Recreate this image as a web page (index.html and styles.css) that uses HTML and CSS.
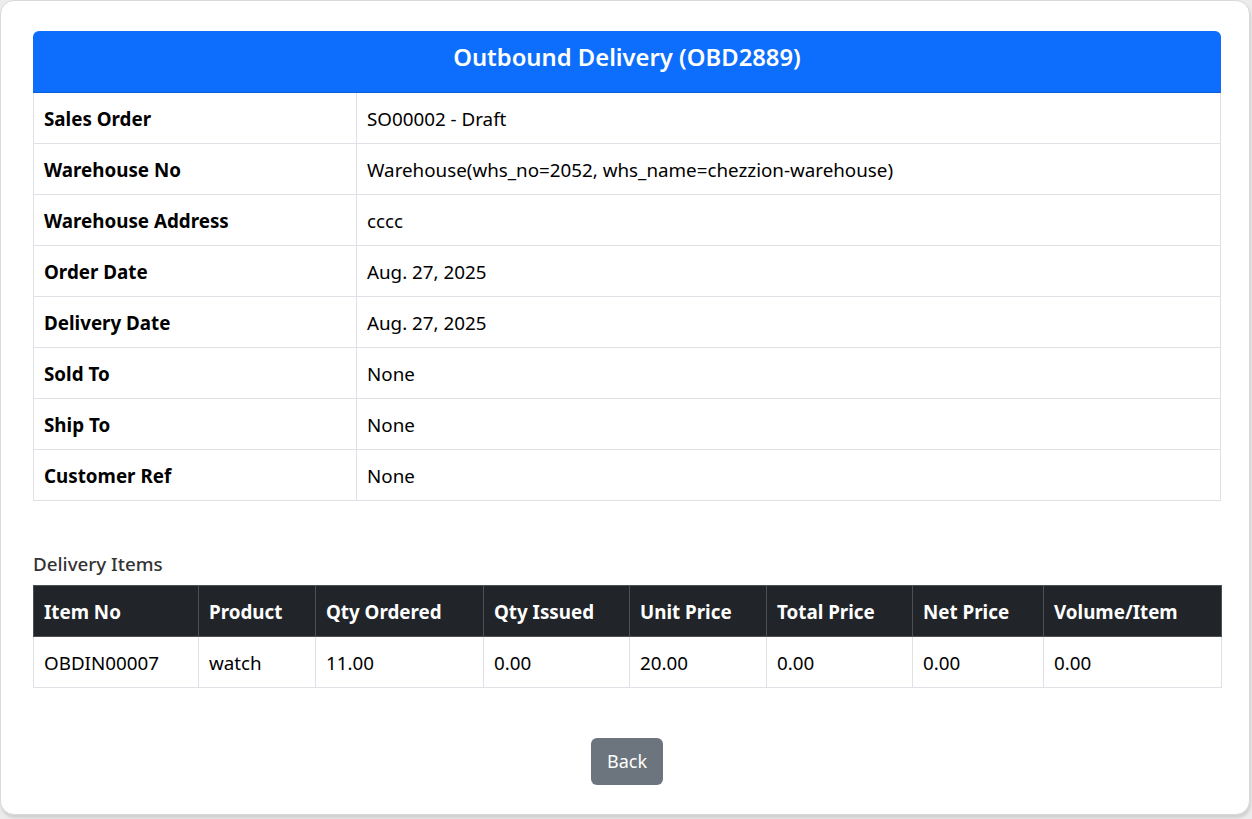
FILE: index.html
```html
<!DOCTYPE html>
<html lang="en">
<head>
<meta charset="utf-8">
<title>Outbound Delivery (OBD2889)</title>
<link rel="stylesheet" href="styles.css">
</head>
<body>
<div class="card">
  <div class="card-header">Outbound Delivery (OBD2889)</div>
  <table class="details">
    <colgroup><col class="label-col"><col></colgroup>
    <tbody>
      <tr><th>Sales Order</th><td>SO00002 - Draft</td></tr>
      <tr><th>Warehouse No</th><td>Warehouse(whs_no=2052, whs_name=chezzion-warehouse)</td></tr>
      <tr><th>Warehouse Address</th><td>cccc</td></tr>
      <tr><th>Order Date</th><td>Aug. 27, 2025</td></tr>
      <tr><th>Delivery Date</th><td>Aug. 27, 2025</td></tr>
      <tr><th>Sold To</th><td>None</td></tr>
      <tr><th>Ship To</th><td>None</td></tr>
      <tr><th>Customer Ref</th><td>None</td></tr>
    </tbody>
  </table>

  <h5 class="section-title">Delivery Items</h5>
  <table class="items">
    <colgroup>
      <col class="c1"><col class="c2"><col class="c3"><col class="c4">
      <col class="c5"><col class="c6"><col class="c7"><col class="c8">
    </colgroup>
    <thead>
      <tr>
        <th>Item No</th><th>Product</th><th>Qty Ordered</th><th>Qty Issued</th>
        <th>Unit Price</th><th>Total Price</th><th>Net Price</th><th>Volume/Item</th>
      </tr>
    </thead>
    <tbody>
      <tr>
        <td>OBDIN00007</td><td>watch</td><td>11.00</td><td>0.00</td>
        <td>20.00</td><td>0.00</td><td>0.00</td><td>0.00</td>
      </tr>
    </tbody>
  </table>

  <div class="actions">
    <a class="btn-back" href="#">Back</a>
  </div>
</div>
</body>
</html>
```

FILE: styles.css
```css
html, body {
  margin: 0;
  padding: 0;
}
body {
  background: #ececec;
  font-family: "Noto Sans", "Open Sans", sans-serif;
  color: #000;
  height: 819px;
  overflow: hidden;
}
.card {
  box-sizing: border-box;
  width: 1250px;
  height: 815px;
  margin: 0;
  background: #fff;
  border: 1px solid #d9d9d9;
  border-radius: 14px;
  box-shadow: 1px 3px 3px rgba(0,0,0,0.12);
  padding: 30px 28px 0 32px;
}
.card-header {
  background: #0d6efd;
  color: #fff;
  text-align: center;
  font-size: 23.8px;
  font-weight: 600;
  line-height: 36px;
  padding: 8px 0 17px;
  border-bottom: 1px solid #0b5ed7;
  border-radius: 6px 6px 0 0;
}
table {
  width: 100%;
  border-collapse: collapse;
  table-layout: fixed;
}
.details th,
.details td {
  border: 1px solid #dee2e6;
  border-top: 0;
  padding: 13px 10px 11px;
  line-height: 26px;
  font-size: 18.8px;
  text-align: left;
  vertical-align: middle;
}
.details th {
  font-weight: 700;
}
.label-col {
  width: 323px;
}
.section-title {
  margin: 50px 0 7px;
  font-size: 18.8px;
  font-weight: 500;
  line-height: 27px;
  color: #333;
}
.items th,
.items td {
  padding: 13px 10px 11px;
  line-height: 26px;
  font-size: 18.8px;
  text-align: left;
  white-space: nowrap;
}
.items th {
  background: #212529;
  color: #fff;
  font-weight: 700;
  border: 1px solid #4d5154;
}
.items td {
  border: 1px solid #dee2e6;
}
.c1 { width: 165px; }
.c2 { width: 117px; }
.c3 { width: 168px; }
.c4 { width: 146px; }
.c5 { width: 137px; }
.c6 { width: 146px; }
.c7 { width: 131px; }
.c8 { width: 178px; }
.actions {
  display: flex;
  justify-content: center;
  margin-top: 50px;
}
.btn-back {
  display: inline-block;
  background: #6c757d;
  color: #fff;
  text-decoration: none;
  font-size: 18px;
  line-height: 27px;
  padding: 10px 16px;
  border-radius: 6px;
}
```
